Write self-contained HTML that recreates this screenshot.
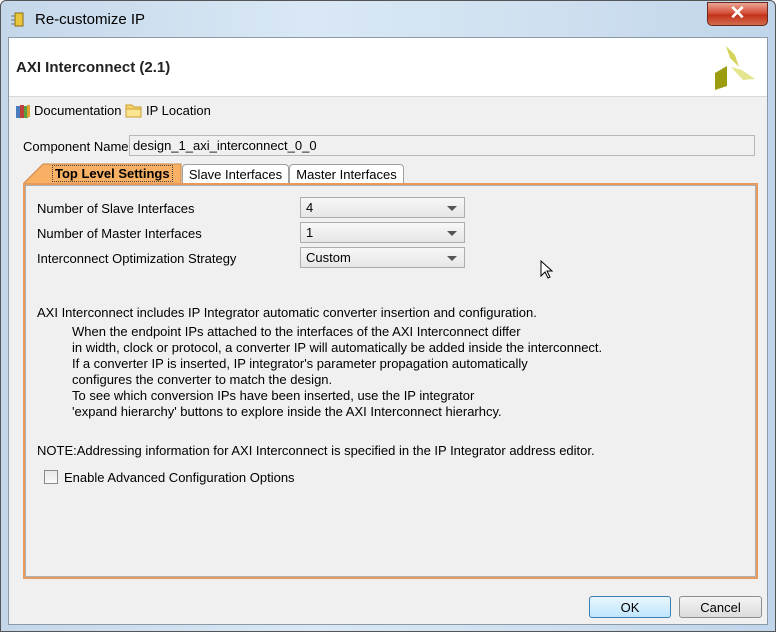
<!DOCTYPE html>
<html><head><style>
*{box-sizing:border-box;margin:0;padding:0}
body{width:776px;height:632px;overflow:hidden;font-family:"Liberation Sans",sans-serif;font-size:13px;color:#000;background:#fff}
.win{position:absolute;left:0;top:0;width:776px;height:632px;border:1px solid #555;border-radius:6px 6px 0 0;background:linear-gradient(90deg,#c4d7ea,#dae8f5 40%,#cfe0f0 70%,#c0d5ea)}
.title{position:absolute;left:34px;top:10px;font-size:15px;color:#000}
.close{position:absolute;left:706px;top:1px;width:61px;height:24px;border:1px solid #6b2a20;border-radius:0 0 5px 5px;background:linear-gradient(#e9a593,#d5523c 45%,#c2321b 55%,#d36b4d);color:#fff;font-size:19px;font-weight:bold;text-align:center;line-height:22px}
.client{position:absolute;left:7px;top:36px;width:760px;height:588px;background:#f0f0f0;border:1px solid #8a9aa8}
.hdr{position:absolute;left:0;top:0;width:758px;height:59px;background:#fff;border-bottom:1px solid #d8d8d8}
.abs{position:absolute;white-space:nowrap}
.inp{position:absolute;background:#f0f0f0;border:1px solid #b8b8b8}
.combo{position:absolute;left:291px;width:165px;height:21px;border:1px solid #adadad;background:linear-gradient(#f7f7f7,#e6e6e6);padding:2px 0 0 5px}
.combo:after{content:"";position:absolute;right:7px;top:8px;border-left:5px solid transparent;border-right:5px solid transparent;border-top:5px solid #555}
.tab{position:absolute;top:126px;height:20px;border:1px solid #a0a0a0;border-bottom:none;border-radius:4px 4px 0 0;background:#fff;padding:2px 0 0;text-align:center}
.btn{position:absolute;top:558px;height:22px;border:1px solid #8e8e8e;border-radius:3px;background:linear-gradient(#f4f4f4,#dcdcdc);text-align:center;padding-top:3px}
</style></head><body>
<div class="win">
<svg class="abs" style="left:9px;top:10px" width="18" height="18"><rect x="5" y="2" width="8" height="13" fill="#e8c53a" stroke="#8a6d10"/><line x1="1" y1="5" x2="5" y2="5" stroke="#777"/><line x1="1" y1="9" x2="5" y2="9" stroke="#777"/><line x1="1" y1="13" x2="5" y2="13" stroke="#777"/></svg>
<div class="title">Re-customize IP</div>
<div class="close">✕</div>
<div class="client">
<div class="hdr">
<div class="abs" style="left:7px;top:21px;font-size:15px;font-weight:bold;color:#222">AXI Interconnect (2.1)</div>
<svg class="abs" style="left:704px;top:4px" width="52" height="52"><polygon points="13,4 22,13 26,25 17,16" fill="#d4d45a"/><polygon points="18,25 29,28 42,37 30,38" fill="#e3e68f"/><polygon points="2,31 14,24 14,44 2,48" fill="#9c9c10"/></svg>
</div>
<svg class="abs" style="left:6px;top:65px" width="16" height="16"><rect x="1" y="3" width="4" height="12" fill="#4a7cc0"/><rect x="5" y="2" width="4" height="13" fill="#c04040"/><rect x="9" y="3" width="4" height="12" fill="#5aa040"/><rect x="12" y="2" width="3" height="12" fill="#e0a030"/></svg>
<div class="abs" style="left:25px;top:65px">Documentation</div>
<svg class="abs" style="left:116px;top:64px" width="18" height="16"><path d="M1 3h6l2 2h7v10H1z" fill="#f5d56a" stroke="#c9a030"/><path d="M1 7h15v8H1z" fill="#fbe590" stroke="#c9a030"/></svg>
<div class="abs" style="left:137px;top:65px">IP Location</div>
<div class="abs" style="left:14px;top:101px">Component Name</div>
<div class="inp" style="left:120px;top:97px;width:626px;height:21px;padding:2px 0 0 3px">design_1_axi_interconnect_0_0</div>
<svg class="abs" style="left:14px;top:125px" width="160" height="22"><path d="M0 21 L20 1 H158 V21Z" fill="#f7b064" stroke="#c9894a"/></svg>
<div class="abs" style="left:43px;top:127px;font-weight:bold;font-size:13px;border:1px dotted #444;padding:0 2px">Top Level Settings</div>
<div class="tab" style="left:173px;width:107px">Slave Interfaces</div>
<div class="tab" style="left:280px;width:115px">Master Interfaces</div>
<div class="abs" style="left:14px;top:145px;width:735px;height:396px;border:2px solid #e59b60;background:#f0f0f0"></div>
<div class="abs" style="left:16px;top:147px;width:731px;height:392px;border:1px solid #b0b0b0"></div>
<div class="abs" style="left:28px;top:163px">Number of Slave Interfaces</div>
<div class="abs" style="left:28px;top:188px">Number of Master Interfaces</div>
<div class="abs" style="left:28px;top:213px">Interconnect Optimization Strategy</div>
<div class="combo" style="top:159px">4</div>
<div class="combo" style="top:184px">1</div>
<div class="combo" style="top:209px">Custom</div>
<svg class="abs" style="left:531px;top:222px" width="14" height="20"><path d="M1 1v15l4-4 3 6 2-1-3-6h5z" fill="#fff" stroke="#000"/></svg>
<div class="abs" style="left:28px;top:267px">AXI Interconnect includes IP Integrator automatic converter insertion and configuration.</div>
<div class="abs" style="left:63px;top:286px;line-height:16px">When the endpoint IPs attached to the interfaces of the AXI Interconnect differ<br>in width, clock or protocol, a converter IP will automatically be added inside the interconnect.<br>If a converter IP is inserted, IP integrator's parameter propagation automatically<br>configures the converter to match the design.<br>To see which conversion IPs have been inserted, use the IP integrator<br>'expand hierarchy' buttons to explore inside the AXI Interconnect hierarhcy.</div>
<div class="abs" style="left:28px;top:405px">NOTE:Addressing information for AXI Interconnect is specified in the IP Integrator address editor.</div>
<div class="abs" style="left:35px;top:432px;width:14px;height:14px;border:1px solid #8a8a8a;background:linear-gradient(#e8e8e8,#fafafa)"></div>
<div class="abs" style="left:55px;top:432px">Enable Advanced Configuration Options</div>
<div class="btn" style="left:580px;width:82px;border-color:#3c7fb1;background:linear-gradient(#eaf6fd,#bee6fd)">OK</div>
<div class="btn" style="left:670px;width:83px">Cancel</div>
</div>
</div>
</body></html>
